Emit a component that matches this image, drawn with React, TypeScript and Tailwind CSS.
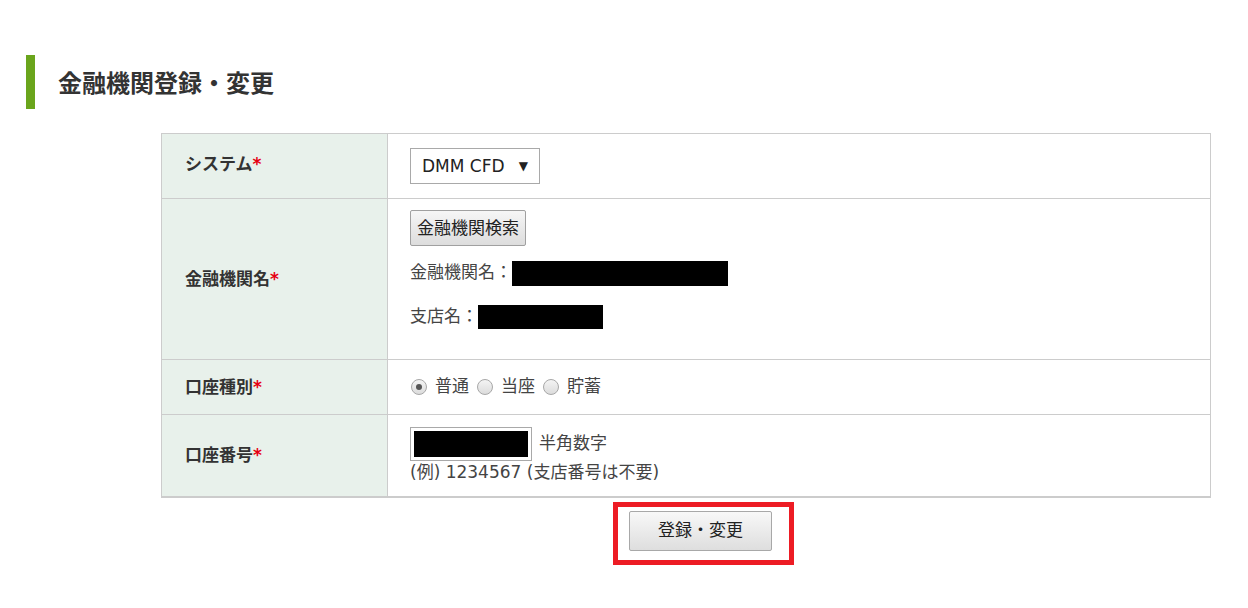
import React from 'react';

const Req = () => <span className="text-[#e60012]">*</span>;

const Radio = ({ checked }: { checked?: boolean }) => (
  <span className="inline-flex h-[16px] w-[16px] shrink-0 items-center justify-center rounded-full border border-[#a8a8a8] bg-gradient-to-b from-[#f4f4f4] to-[#dcdcdc]">
    {checked && <span className="h-[6px] w-[6px] rounded-full bg-[#555]" />}
  </span>
);

export default function App() {
  return (
    <div
      className="h-[608px] w-[1248px] bg-white text-[#333]"
      style={{ fontFamily: '"DejaVu Sans", "Noto Sans CJK JP", sans-serif' }}
    >
      <div className="pt-[55px] pl-[26px]">
        <div className="flex h-[54px] items-center border-l-[9px] border-[#6aa51c] pl-[23px]">
          <h1 className="text-[24px] font-bold leading-none text-[#333]" style={{ fontFamily: '"Noto Sans CJK JP", sans-serif' }}>
            金融機関登録・変更
          </h1>
        </div>
      </div>

      <div className="ml-[161px] mt-[24px] w-[1050px]">
        <table className="w-full border-collapse border border-b-2 border-[#cccccc] text-[17px]">
          <tbody>
            <tr className="h-[65px] border-b border-[#cccccc]">
              <th className="w-[226px] border-r border-[#cccccc] bg-[#e8f1eb] pl-[23px] text-left align-middle font-bold leading-none">
                <span className="relative -top-[2px]">システム<Req /></span>
              </th>
              <td className="pl-[22px] align-middle">
                <div className="flex h-[36px] w-[130px] items-center border border-[#a9a9a9] bg-white pl-[11px] text-[17px] leading-none text-[#222]">
                  DMM CFD
                  <span className="ml-auto mr-[11px] text-[12px]">▼</span>
                </div>
              </td>
            </tr>
            <tr className="h-[161px] border-b border-[#cccccc]">
              <th className="border-r border-[#cccccc] bg-[#e8f1eb] pl-[23px] text-left align-middle font-bold leading-none">
                金融機関名<Req />
              </th>
              <td className="pl-[22px] pt-[11px] align-top">
                <button className="h-[36px] rounded-[2px] border border-[#a0a0a0] bg-gradient-to-b from-[#f6f6f6] to-[#dddddd] px-[6px] text-[17px] leading-none text-[#222]">
                  金融機関検索
                </button>
                <div className="mt-[14px] flex h-[26px] items-center text-[#444]">
                  <span>金融機関名：</span>
                  <span className="h-[25px] w-[216px] bg-black" />
                </div>
                <div className="mt-[18px] flex h-[26px] items-center text-[#444]">
                  <span>支店名：</span>
                  <span className="h-[24px] w-[125px] bg-black" />
                </div>
              </td>
            </tr>
            <tr className="h-[55px] border-b border-[#cccccc]">
              <th className="border-r border-[#cccccc] bg-[#e8f1eb] pl-[23px] text-left align-middle font-bold leading-none">
                口座種別<Req />
              </th>
              <td className="pl-[23px] align-middle">
                <div className="flex items-center text-[#444]">
                  <Radio checked />
                  <span className="ml-[8px] mr-[8px]">普通</span>
                  <Radio />
                  <span className="ml-[8px] mr-[8px]">当座</span>
                  <Radio />
                  <span className="ml-[8px]">貯蓄</span>
                </div>
              </td>
            </tr>
            <tr className="h-[82px]">
              <th className="border-r border-[#cccccc] bg-[#e8f1eb] pl-[23px] text-left align-middle font-bold leading-none">
                口座番号<Req />
              </th>
              <td className="pl-[22px] pt-[12px] align-top text-[#444]">
                <div className="flex items-center">
                  <span className="flex h-[34px] w-[122px] items-center justify-center border border-[#a9a9a9] bg-white">
                    <span className="h-[26px] w-[114px] bg-black" />
                  </span>
                  <span className="ml-[7px]">半角数字</span>
                </div>
                <div className="leading-[22px]">(例) 1234567 (支店番号は不要)</div>
              </td>
            </tr>
          </tbody>
        </table>
      </div>

      <div className="mt-[4px] flex justify-center pl-[159px]">
        <div className="border-[5px] border-[#ed1c24] pb-[9px] pl-[11px] pr-[17px] pt-[4px]">
          <button className="h-[40px] w-[143px] rounded-[2px] border border-[#a8a8a8] bg-gradient-to-b from-[#f8f8f8] to-[#dedede] text-[17px] leading-none text-[#222]">
            登録・変更
          </button>
        </div>
      </div>
    </div>
  );
}
